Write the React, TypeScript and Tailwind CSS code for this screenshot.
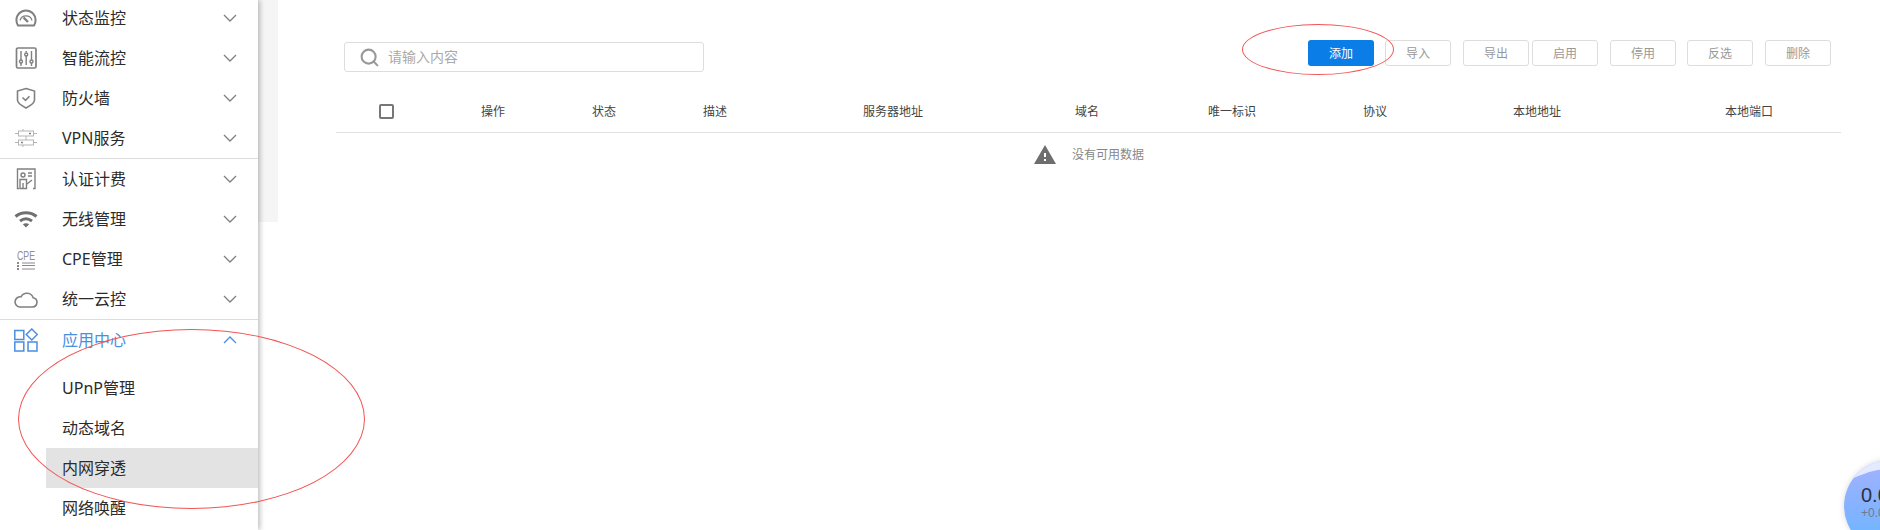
import { Search } from "lucide-react";
import type { ReactNode } from "react";

function Chevron({ up = false }: { up?: boolean }) {
  return (
    <svg width="14" height="8" viewBox="0 0 14 8" fill="none" stroke="currentColor" strokeWidth="1.3" className={up ? "text-[#4a8fe0]" : "text-[#808080]"}>
      <polyline points={up ? "1,7 7,1 13,7" : "1,1 7,7 13,1"} />
    </svg>
  );
}

const iconProps = { width: 24, height: 24, viewBox: "0 0 24 24", fill: "none", stroke: "#808080", strokeWidth: 1.4 };

function GaugeIcon() {
  return (
    <svg {...iconProps} strokeWidth={2}>
      <path d="M4 19.5h16c1-1.6 1.6-3.4 1.6-5.5A9.6 9.6 0 0 0 2.4 14c0 2.1.6 3.9 1.6 5.5z" />
      <path d="M6 14.5a6.2 6.2 0 0 1 12 0" strokeWidth="1.2" />
      <path d="M9.5 11.5l4.5 4.5" strokeWidth="2.4" />
    </svg>
  );
}

function SlidersIcon() {
  return (
    <svg {...iconProps}>
      <rect x="2.5" y="2" width="19.5" height="20" rx="1.5" strokeWidth="1.7" />
      <path d="M7 5v9M7 17v3M12.2 5v1.5M12.2 10v9M17.5 5v9M17.5 17v3" />
      <circle cx="7" cy="15.5" r="1.5" />
      <circle cx="12.2" cy="8.5" r="1.5" />
      <circle cx="17.5" cy="15.5" r="1.5" />
    </svg>
  );
}

function ShieldIcon() {
  return (
    <svg {...iconProps} strokeWidth={1.6}>
      <path d="M12 2.5l8.5 2.5v9c0 3-3.5 5.5-8.5 8-5-2.5-8.5-5-8.5-8V5z" />
      <path d="M8.5 11.5l3 2.8 4-4" />
    </svg>
  );
}

function VpnIcon() {
  return (
    <svg {...iconProps} stroke="#b5b5b5" strokeWidth={1}>
      <rect x="4.5" y="5" width="15" height="5" />
      <rect x="4.5" y="14" width="15" height="5" />
      <path d="M1 7.5h3.5M19.5 7.5H23M1 16.5h3.5M19.5 16.5H23M9 3v2M9 19v2M12 10v4" />
      <path d="M15 7.5h2M7 16.5h2" stroke="#808080" strokeWidth="1.5" />
    </svg>
  );
}

function AuthIcon() {
  return (
    <svg {...iconProps} strokeWidth={1.4}>
      <path d="M5 21.5H3.5V2H21v19.5h-2" />
      <circle cx="9" cy="8" r="2" />
      <path d="M6 21.5v-9h6.5v9zM9 16v5.5M13 17l5-4" />
      <path d="M14 6h4M14 9h4" />
    </svg>
  );
}

function WifiIcon() {
  return (
    <svg {...iconProps} stroke="#707070" strokeWidth={3}>
      <path d="M1.5 9.5c6-5 15-5 21 0" />
      <path d="M6 14c3.8-2.8 8.2-2.8 12 0" />
      <path d="M12 20.5l-3.2-3.2c2-1.3 4.4-1.3 6.4 0z" fill="#707070" stroke="none" />
    </svg>
  );
}

function CpeIcon() {
  return (
    <svg {...iconProps} stroke="#8a8a8a" strokeWidth={1}>
      <text x="3" y="12.5" fontSize="12" stroke="none" fill="#8f8f8f" fontFamily="'Liberation Sans',sans-serif" textLength="18" lengthAdjust="spacingAndGlyphs">CPE</text>
      <path d="M8 16h13M8 18.5h13M8 22h13" />
      <path d="M3 16h2M3 19h2M3 22h2" strokeWidth="2" />
    </svg>
  );
}

function CloudIcon() {
  return (
    <svg {...iconProps} strokeWidth={1.6}>
      <path d="M5.5 20h13a4.7 4.7 0 0 0 .7-9.3A6.7 6.7 0 0 0 7 9.8 5.1 5.1 0 0 0 5.5 20z" />
    </svg>
  );
}

function AppsIcon() {
  return (
    <svg {...iconProps} stroke="#4a8fe0" strokeWidth={1.5}>
      <rect x="0.8" y="2.5" width="9" height="9" />
      <rect x="0.8" y="14" width="9" height="9" />
      <rect x="14" y="14" width="9" height="9" />
      <path d="M17.8 1l5.5 5.5-5.5 5.5-5.5-5.5z" />
    </svg>
  );
}

function NavRow({ icon, label }: { icon: ReactNode; label: string }) {
  return (
    <div className="flex h-10 items-center pl-[14px] pr-[21px] text-[#2b2b2b]">
      <span className="mr-6 flex h-6 w-6 shrink-0 items-center justify-center">{icon}</span>
      <span className="flex-1">{label}</span>
      <Chevron />
    </div>
  );
}

const groupOne = [
  { label: "状态监控", icon: <GaugeIcon /> },
  { label: "智能流控", icon: <SlidersIcon /> },
  { label: "防火墙", icon: <ShieldIcon /> },
  { label: "VPN服务", icon: <VpnIcon /> },
];

const groupTwo = [
  { label: "认证计费", icon: <AuthIcon /> },
  { label: "无线管理", icon: <WifiIcon /> },
  { label: "CPE管理", icon: <CpeIcon /> },
  { label: "统一云控", icon: <CloudIcon /> },
];

const subItems = ["UPnP管理", "动态域名", "内网穿透", "网络唤醒"];

function Sidebar() {
  return (
    <aside className="relative z-10 h-[530px] w-[258px] shrink-0 overflow-hidden bg-white text-base shadow-[2px_0_5px_rgba(0,0,0,0.25)]">
      <div className="-mt-[2px]">
        {groupOne.map((item) => (
          <NavRow key={item.label} {...item} />
        ))}
        <div className="h-px bg-[#ddd]" />
        {groupTwo.map((item) => (
          <NavRow key={item.label} {...item} />
        ))}
        <div className="h-px bg-[#ddd]" />
        <div className="flex h-10 items-center pl-[14px] pr-[21px] text-[#4a8fe0]">
          <span className="mr-6 flex h-6 w-6 shrink-0 items-center justify-center"><AppsIcon /></span>
          <span className="flex-1">应用中心</span>
          <Chevron up />
        </div>
        <ul className="mt-2">
          {subItems.map((name) => (
            <li
              key={name}
              className={`ml-[46px] flex h-10 items-center pl-4 text-[#2b2b2b] ${name === "内网穿透" ? "bg-[#e3e3e3]" : ""}`}
            >
              {name}
            </li>
          ))}
        </ul>
      </div>
    </aside>
  );
}

function Toolbar() {
  return (
    <div className="flex items-start justify-between pl-2 pr-[10px] pt-10">
      <label className="mt-[2px] flex h-[30px] w-[360px] items-center rounded-[3px] border border-[#ddd] pl-[14px]">
        <Search size={21} strokeWidth={2.4} className="mr-2 shrink-0 text-[#999]" />
        <input
          placeholder="请输入内容"
          className="w-full bg-transparent text-sm outline-none placeholder:text-[#aaa]"
        />
      </label>
      <div className="flex text-xs">
        <button className="h-[26px] w-[66px] rounded-[3px] bg-[#0a7ee6] pt-px text-white">添加</button>
        <GhostButton className="ml-[11px]">导入</GhostButton>
        <GhostButton className="ml-3">导出</GhostButton>
        <GhostButton className="ml-[3px]">启用</GhostButton>
        <GhostButton className="ml-3">停用</GhostButton>
        <GhostButton className="ml-[11px]">反选</GhostButton>
        <GhostButton className="ml-3">删除</GhostButton>
      </div>
    </div>
  );
}

function GhostButton({ children, className }: { children: ReactNode; className: string }) {
  return (
    <button className={`h-[26px] w-[66px] rounded-[3px] border border-[#ddd] bg-white pt-px text-[#999] ${className}`}>
      {children}
    </button>
  );
}

const columns = ["操作", "状态", "描述", "服务器地址", "域名", "唯一标识", "协议", "本地地址", "本地端口"];

function DataTable() {
  return (
    <div className="mt-5">
      <div className="grid h-[41px] grid-cols-[145px_111px_111px_160px_212px_133px_155px_150px_212px_1fr] items-center border-b border-[#e2e2e2] text-xs text-[#444]">
        <span className="mb-[2px] ml-[43px] h-[15px] w-[15px] rounded-[2px] border-2 border-[#777]" />
        {columns.map((name) => (
          <span key={name}>{name}</span>
        ))}
      </div>
      <div className="flex h-[43px] items-center justify-center gap-[15px] text-xs text-[#888]">
        <svg width="24" height="24" viewBox="0 0 24 24" fill="#6e6e6e">
          <path d="M1 21h22L12 2 1 21zm12-3h-2v-2h2v2zm0-4h-2v-4h2v4z" />
        </svg>
        <span>没有可用数据</span>
      </div>
    </div>
  );
}

function SpeedBubble() {
  return (
    <div className="absolute left-[1844px] top-[460px] z-20 h-[92px] w-[92px] overflow-hidden rounded-full bg-gradient-to-b from-[#a2b2ff] via-[#86b2ff] to-[#62b8ff] shadow-[0_0_6px_rgba(0,0,0,0.15)]">
      <svg width="92" height="22" viewBox="0 0 92 22" className="absolute left-0 top-0" fill="#e4eaff">
        <path d="M0 0h92v6c-10-2-18 0-26 3s-16 2-24 1-14 0-42 12z" />
      </svg>
      <div className="absolute left-[17px] top-[23px] font-['Liberation_Sans',sans-serif] text-[20px] leading-6 text-[#2b3240]">0.0</div>
      <div className="absolute left-[17px] top-[45px] font-['Liberation_Sans',sans-serif] text-xs leading-4 text-[#6d7a90]">+0.0</div>
    </div>
  );
}

export default function App() {
  return (
    <div className="relative flex h-[530px] w-[1880px] overflow-hidden bg-white font-['Noto_Sans','Noto_Sans_CJK_SC',sans-serif]">
      <Sidebar />
      <div className="h-[222px] w-5 shrink-0 bg-[#f5f5f5]" />
      <main className="w-[1563px] pl-[58px]">
        <Toolbar />
        <DataTable />
      </main>
      <SpeedBubble />
      {/* hand-drawn annotations on the screenshot */}
      <div className="absolute left-[1242px] top-[24px] z-30 h-[51px] w-[152px] rounded-[50%] border border-[#f25555]" />
      <div className="absolute left-[18px] top-[329px] z-30 h-[180px] w-[347px] rounded-[50%] border border-[#f25555]" />
    </div>
  );
}
